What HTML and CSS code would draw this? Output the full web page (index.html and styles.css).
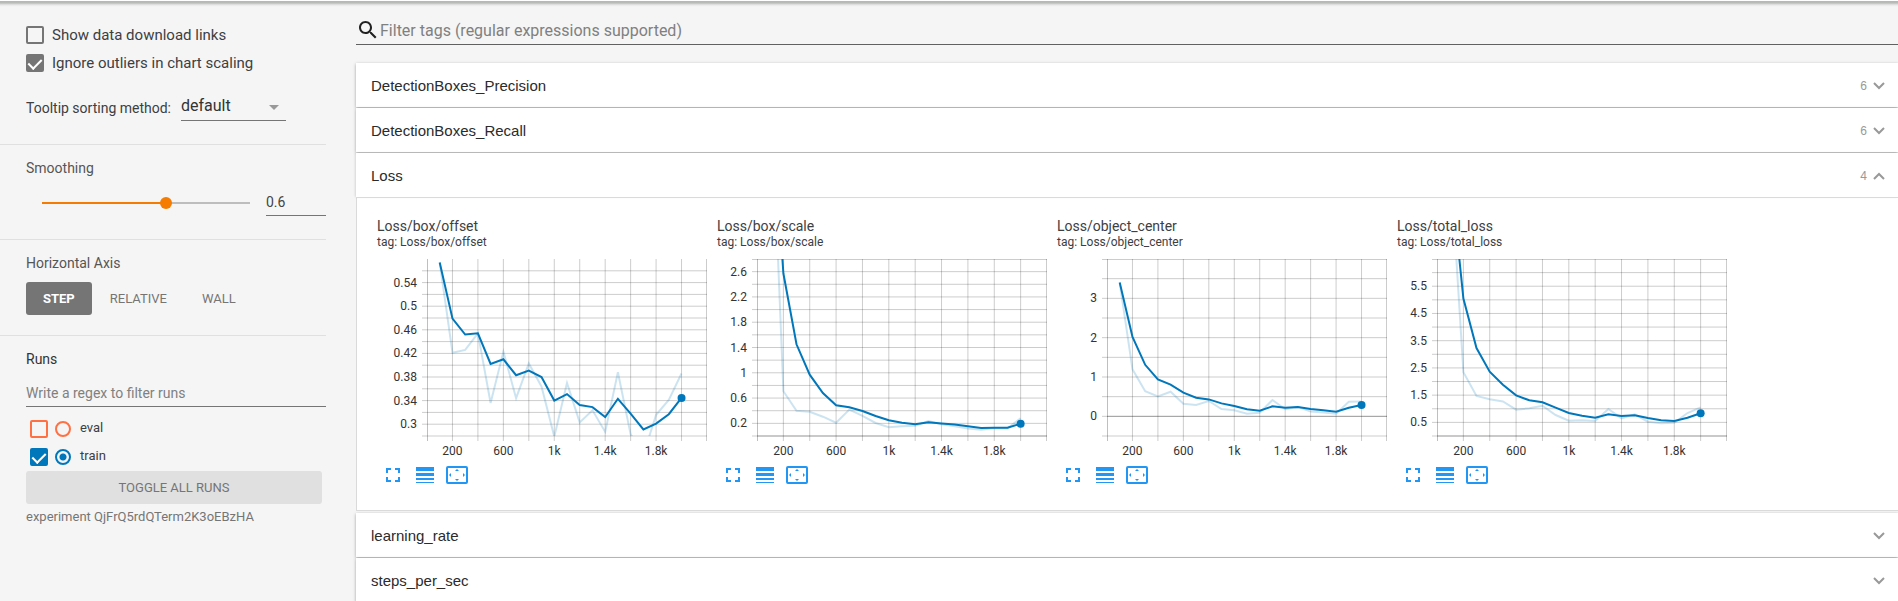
FILE: index.html
```html
<!DOCTYPE html>
<html lang="en">
<head>
<meta charset="utf-8">
<title>TensorBoard</title>
<link rel="stylesheet" href="styles.css">
</head>
<body>
<div class="toolbar-edge"></div>
<div class="layout">
  <aside class="sidebar">
    <section class="group options">
      <label class="option"><input type="checkbox" class="check">Show data download links</label>
      <label class="option"><input type="checkbox" class="check" checked>Ignore outliers in chart scaling</label>
      <div class="sort-row">
        <label for="sort">Tooltip sorting method:</label>
        <div class="select-wrap">
          <select id="sort"><option>default</option><option>ascending</option><option>descending</option></select>
          <svg class="caret" width="10" height="5" viewBox="0 0 10 5" aria-hidden="true"><path d="M0 0h10L5 5z"/></svg>
        </div>
      </div>
    </section>
    <section class="group smoothing">
      <label class="group-title" for="smooth">Smoothing</label>
      <div class="slider-row">
        <input id="smooth" class="slider" type="range" min="0" max="1" step="0.1" value="0.6">
        <input class="slider-value" type="text" value="0.6" aria-label="Smoothing value">
      </div>
    </section>
    <section class="group axis">
      <h3 class="group-title">Horizontal Axis</h3>
      <div class="axis-buttons">
        <button type="button" class="axis-button active">STEP</button>
        <button type="button" class="axis-button">RELATIVE</button>
        <button type="button" class="axis-button">WALL</button>
      </div>
    </section>
    <section class="group runs">
      <h3 class="group-title dark">Runs</h3>
      <input class="run-filter" type="text" placeholder="Write a regex to filter runs" aria-label="Filter runs">
      <div class="run eval">
        <input type="checkbox" class="check" id="run-eval">
        <input type="radio" class="radio" name="run" aria-label="Only eval">
        <label for="run-eval">eval</label>
      </div>
      <div class="run train">
        <input type="checkbox" class="check" id="run-train" checked>
        <input type="radio" class="radio" name="run" aria-label="Only train" checked>
        <label for="run-train">train</label>
      </div>
      <button type="button" class="toggle-all">TOGGLE ALL RUNS</button>
      <p class="experiment">experiment QjFrQ5rdQTerm2K3oEBzHA</p>
    </section>
  </aside>
  <main class="main">
    <div class="search">
      <svg width="24" height="24" viewBox="0 0 24 24" aria-hidden="true"><path d="M15.5 14h-.79l-.28-.27C15.41 12.59 16 11.11 16 9.500 16 5.910 13.090 3 9.500 3S3 5.910 3 9.500 5.910 16 9.500 16c1.610 0 3.090-.59 4.230-1.570l.27.28v.79l5 4.990L20.490 19l-4.990-5zm-6 0C7.010 14 5 11.990 5 9.500S7.010 5 9.500 5 14 7.010 14 9.500 11.990 14 9.500 14z"/></svg>
      <input type="text" placeholder="Filter tags (regular expressions supported)" aria-label="Filter tags">
    </div>
    <div class="categories">
      <button type="button" class="category"><span>DetectionBoxes_Precision</span><span class="count">6</span><svg class="chevron" viewBox="0 0 12 8"><path d="M1 1l5 5 5-5"/></svg></button>
      <button type="button" class="category"><span>DetectionBoxes_Recall</span><span class="count">6</span><svg class="chevron" viewBox="0 0 12 8"><path d="M1 1l5 5 5-5"/></svg></button>
      <button type="button" class="category"><span>Loss</span><span class="count">4</span><svg class="chevron" viewBox="0 0 12 8"><path d="M1 7l5-5 5 5"/></svg></button>
      <div class="charts" id="charts"></div>
      <button type="button" class="category"><span>learning_rate</span><span class="count"></span><svg class="chevron" viewBox="0 0 12 8"><path d="M1 1l5 5 5-5"/></svg></button>
      <button type="button" class="category"><span>steps_per_sec</span><span class="count"></span><svg class="chevron" viewBox="0 0 12 8"><path d="M1 1l5 5 5-5"/></svg></button>
    </div>
  </main>
</div>
<script src="charts.js"></script>
</body>
</html>
```

FILE: styles.css
```css
* { box-sizing: border-box; }
body {
  margin: 0;
  height: 100vh;
  overflow: hidden;
  background: #f5f5f5;
  color: #3c4043;
  font: 14px/20px Roboto, sans-serif;
}
input, select, button { font-family: inherit; margin: 0; border-radius: 0; }
h3, p { margin: 0; font-weight: 400; }
.toolbar-edge {
  height: 7px;
  background: linear-gradient(#fff 1px, #b4b8b4 1px, #b9bcb9 3px, #d4d5d4 4px, #e6e6e6 5px, #f1f1f1 6px, #f5f5f5);
}
.layout { display: grid; grid-template-columns: 326px minmax(0, 1fr); column-gap: 30px; }

.group { padding-left: 26px; border-bottom: 1px solid #e0e0e0; }
.group:last-child { border-bottom: 0; }
.group-title { display: block; font-size: 14px; line-height: 20px; color: #555; }
.group-title.dark { color: #333; }

.options { padding-top: 18px; padding-bottom: 23px; }
.option { display: flex; align-items: center; gap: 8px; height: 20px; margin-bottom: 8px; font-size: 15px; }
.check {
  --tone: #757575;
  appearance: none;
  flex: none;
  display: grid;
  justify-items: center;
  width: 18px;
  height: 18px;
  border: 2px solid var(--tone);
  border-radius: 2px;
}
.check:checked { background: var(--tone); }
.check:checked::after {
  content: "";
  width: 6px;
  height: 11px;
  border: solid #fff;
  border-width: 0 2px 2px 0;
  transform: rotate(45deg);
}
.sort-row { display: flex; align-items: flex-end; gap: 10px; margin-top: 18px; }
.sort-row label { padding-bottom: 3px; }
.select-wrap { position: relative; width: 105px; }
.select-wrap select {
  appearance: none;
  display: block;
  width: 100%;
  height: 30px;
  padding: 0;
  border: 0;
  border-bottom: 1px solid #757575;
  background: none;
  color: #333;
  font-size: 16px;
}
.caret { position: absolute; right: 7px; top: 14px; fill: #999; }

.smoothing { padding-top: 13px; padding-bottom: 23px; }
.slider-row { display: flex; align-items: flex-end; gap: 16px; margin-top: 10px; padding-left: 16px; }
.slider { appearance: none; flex: 1; min-width: 0; height: 12px; margin-bottom: 7px; background: linear-gradient(90deg, #f57c00 60%, #bdbdbd 60%) center / 100% 2px no-repeat; }
.slider::-webkit-slider-thumb { appearance: none; width: 12px; height: 12px; border-radius: 50%; background: #f57c00; }
.slider-value { width: 60px; height: 28px; padding: 0; border: 0; border-bottom: 1px solid #757575; background: none; color: #444; font-size: 14px; }

.axis { padding-top: 13px; padding-bottom: 20px; }
.axis-buttons { display: flex; gap: 1px; margin-top: 9px; }
.axis-button { height: 33px; padding: 0 17px; border: 0; border-radius: 3px; background: none; color: #757575; font-size: 13px; }
.axis-button.active { background: #757575; color: #fff; font-weight: 700; }

.runs { padding-top: 13px; }
.run-filter { display: block; width: 100%; height: 28px; margin-top: 10px; padding: 0; border: 0; border-bottom: 1px solid #757575; background: none; font-size: 14px; }
.run-filter::placeholder, .search input::placeholder { color: #808080; }
.run { display: flex; align-items: center; height: 28px; padding-left: 4px; font-size: 13px; }
.run-filter + .run { margin-top: 8px; }
.run label { margin-left: 9px; line-height: 16px; padding-bottom: 2px; }
.eval .check, .eval .radio { --tone: #ff7043; }
.train .check, .train .radio { --tone: #0077bb; }
.radio { appearance: none; width: 16px; height: 16px; margin-left: 7px; border: 2px solid var(--tone); border-radius: 50%; }
.radio:checked { background: radial-gradient(circle, var(--tone) 3px, transparent 4px); }
.toggle-all { display: block; width: calc(100% - 4px); height: 33px; border: 0; border-radius: 3px; background: #e0e0e0; color: #757575; font-size: 13px; }
.experiment { margin-top: 3px; font-size: 13px; color: #757575; }

.search { display: flex; align-items: center; height: 38px; padding-top: 9px; border-bottom: 1px solid #616161; }
.search svg { flex: none; fill: #212121; }
.search input { flex: 1; padding: 0; border: 0; background: none; font-size: 16px; }
.categories { margin-top: 18px; }
.category {
  display: flex;
  align-items: center;
  width: 100%;
  height: 44px;
  margin-bottom: 1px;
  padding: 2px 13px 0 15px;
  border: 0;
  background: #fff;
  box-shadow: 0 1px 3px rgba(0, 0, 0, .35);
  color: #2b2b2b;
  font: 15px/20px "Liberation Sans", Arial, sans-serif;
}
.count { margin-left: auto; font-size: 12px; color: #999; }
.chevron { width: 12px; height: 8px; margin-left: 6px; fill: none; stroke: #999; stroke-width: 2; }

.charts {
  position: relative;
  display: flex;
  flex-wrap: wrap;
  gap: 10px;
  margin-bottom: 2px;
  padding: 19px 20px 23px;
  background: #fff;
  border: solid #dadada;
  border-width: 0 0 1px 1px;
}
.category:has(+ .charts) { position: relative; z-index: 1; box-shadow: 0 1px 0 #dadada, -1px 0 2px rgba(0, 0, 0, .12); }
.card { width: 330px; }
.card h4 { margin: 0; font-size: 14px; font-weight: 400; line-height: 18px; }
.card p { font-size: 12px; line-height: 14px; }
.plot { display: block; width: 100%; height: 202px; margin-top: 10px; }
.plot text { font: 12px Roboto, sans-serif; fill: #333; }
.grid { stroke: #000; stroke-opacity: .2; }
.axis-line { stroke: #000; stroke-opacity: .25; }
.smooth, .raw { fill: none; stroke: #0077bb; stroke-width: 2; }
.raw { opacity: .2; }
.dot { fill: #0077bb; }
.tools { display: flex; align-items: center; gap: 8px; margin-top: 2px; padding-left: 4px; }
.tools button { display: grid; place-items: center; width: 24px; height: 24px; padding: 0; border: 0; background: none; }
.tools svg { display: block; overflow: visible; fill: #2196f3; }
```

FILE: charts.js
```js
const charts = [
  { tag: "Loss/box/offset", left: 50, min: 0.28, max: 0.58, step: 0.02, topLine: false,
    smooth: [.574,.479,.452,.454,.402,.41,.383,.391,.38,.34,.351,.3325,.329,.312,.343,.318,.291,.301,.317,.3445],
    raw: [.574,.421,.426,.454,.336,.423,.344,.403,.364,.279,.37,.303,.3235,.287,.388,.283,.248,.316,.341,.386] },
  { tag: "Loss/box/scale", left: 40, min: 0, max: 2.8, step: 0.2, topLine: true,
    smooth: [5.6,2.57,1.45,.97,.68,.485,.455,.395,.317,.248,.21,.185,.216,.2,.18,.153,.127,.132,.132,.195],
    raw: [5.87,.707,.4,.385,.306,.21,.417,.32,.206,.137,.153,.163,.237,.185,.153,.12,.1,.127,.12,.28] },
  { tag: "Loss/object_center", left: 50, min: -0.5, max: 4, step: 0.5, topLine: true,
    smooth: [3.4,2.02,1.31,.94,.805,.6,.475,.43,.33,.263,.178,.144,.254,.22,.237,.186,.153,.119,.22,.288],
    raw: [3.4,1.195,.636,.508,.627,.322,.288,.39,.186,.153,.068,.093,.415,.178,.24,.12,.1,.068,.373,.38] },
  { tag: "Loss/total_loss", left: 40, min: 0, max: 6.5, step: 0.5, topLine: true,
    smooth: [9.77,5.05,3.23,2.36,1.885,1.49,1.31,1.236,1.04,.845,.747,.673,.796,.734,.76,.66,.575,.55,.673,.832],
    raw: [10.15,2.34,1.47,1.346,1.27,.967,1.016,1.11,.77,.563,.575,.55,.99,.65,.796,.526,.465,.49,.845,1.05] }
];
const HEIGHT = 177, WIDTH = 330;
const tools = `
  <div class="tools">
    <button type="button" aria-label="Fit domain to data"><svg width="14" height="14" viewBox="0 0 14 14"><path d="M0 0h5v2H2v3H0zM9 0h5v5h-2V2H9zM0 9h2v3h3v2H0zM12 9h2v5H9v-2h3z"/></svg></button>
    <button type="button" aria-label="Toggle log scale"><svg width="18" height="16" viewBox="0 0 18 16"><path d="M0 0h18v4H0zM0 6h18v3H0zM0 11h18v2H0zM0 15h18v1H0z"/></svg></button>
    <button type="button" aria-label="Fit to screen"><svg width="22" height="18" viewBox="0 0 22 18"><path fill-rule="evenodd" d="M2 0h18a2 2 0 0 1 2 2v14a2 2 0 0 1-2 2H2a2 2 0 0 1-2-2V2a2 2 0 0 1 2-2zm0 2v14h18V2zM11 3l2 2H9zM11 15l-2-2h4zM3 9l2-2v4zM19 9l-2 2V7z"/></svg></button>
  </div>`;

function drawChart(c, index) {
  const x = step => c.left + step * (WIDTH - c.left) / 2200;
  const y = v => HEIGHT - (v - c.min) / (c.max - c.min) * HEIGHT;
  const points = list => list.map((v, i) => x((i + 1) * 100).toFixed(1) + "," + y(v).toFixed(1)).join(" ");
  let lines = "", labels = "";
  for (let s = 200; s <= 2200; s += 200) {
    const px = Math.min(x(s), WIDTH - .5);
    lines += `<path class="grid" d="M${px} 0V${HEIGHT + 5}"/>`;
    if (s % 400 === 200 && s < 2200) {
      labels += `<text x="${x(s)}" y="196" text-anchor="middle">${s < 1000 ? s : s / 1000 + "k"}</text>`;
    }
  }
  const count = Math.round((c.max - c.min) / c.step);
  for (let i = 0; i <= count; i++) {
    if (i === count && !c.topLine) continue;
    const v = c.min + i * c.step;
    const py = Math.max(y(v), .5);
    lines += `<path class="grid" d="M${c.left - 5} ${py}H${WIDTH}"/>`;
    if (i % 2 === 1 && i < count && y(v) > 14 - 4) {
      if (c.tag !== "Loss/box/offset" || v < .55) {
        labels += `<text x="${c.left - 10}" y="${y(v) + 4}" text-anchor="end">${+v.toFixed(2)}</text>`;
      }
    }
  }
  const base = y(Math.max(0, c.min));
  return `<article class="card">
    <h4>${c.tag}</h4><p>tag: ${c.tag}</p>
    <svg class="plot" viewBox="0 0 330 202" role="img" aria-label="${c.tag}">
      <clipPath id="clip${index}"><path d="M${c.left} 0H${WIDTH}V${HEIGHT}H${c.left}z"/></clipPath>
      ${lines}
      <path class="axis-line" d="M${c.left + .5} 0V${HEIGHT + 5}"/>
      ${c.min > 0 ? "" : `<path class="axis-line" d="M${c.left} ${base}H${WIDTH}"/>`}
      <g clip-path="url(#clip${index})">
        <polyline class="raw" points="${points(c.raw)}"/>
        <polyline class="smooth" points="${points(c.smooth)}"/>
      </g>
      <circle class="dot" cx="${x(2000)}" cy="${y(c.smooth[19])}" r="4"/>
      ${labels}
    </svg>${tools}
  </article>`;
}
document.getElementById("charts").innerHTML = charts.map(drawChart).join("");
```
